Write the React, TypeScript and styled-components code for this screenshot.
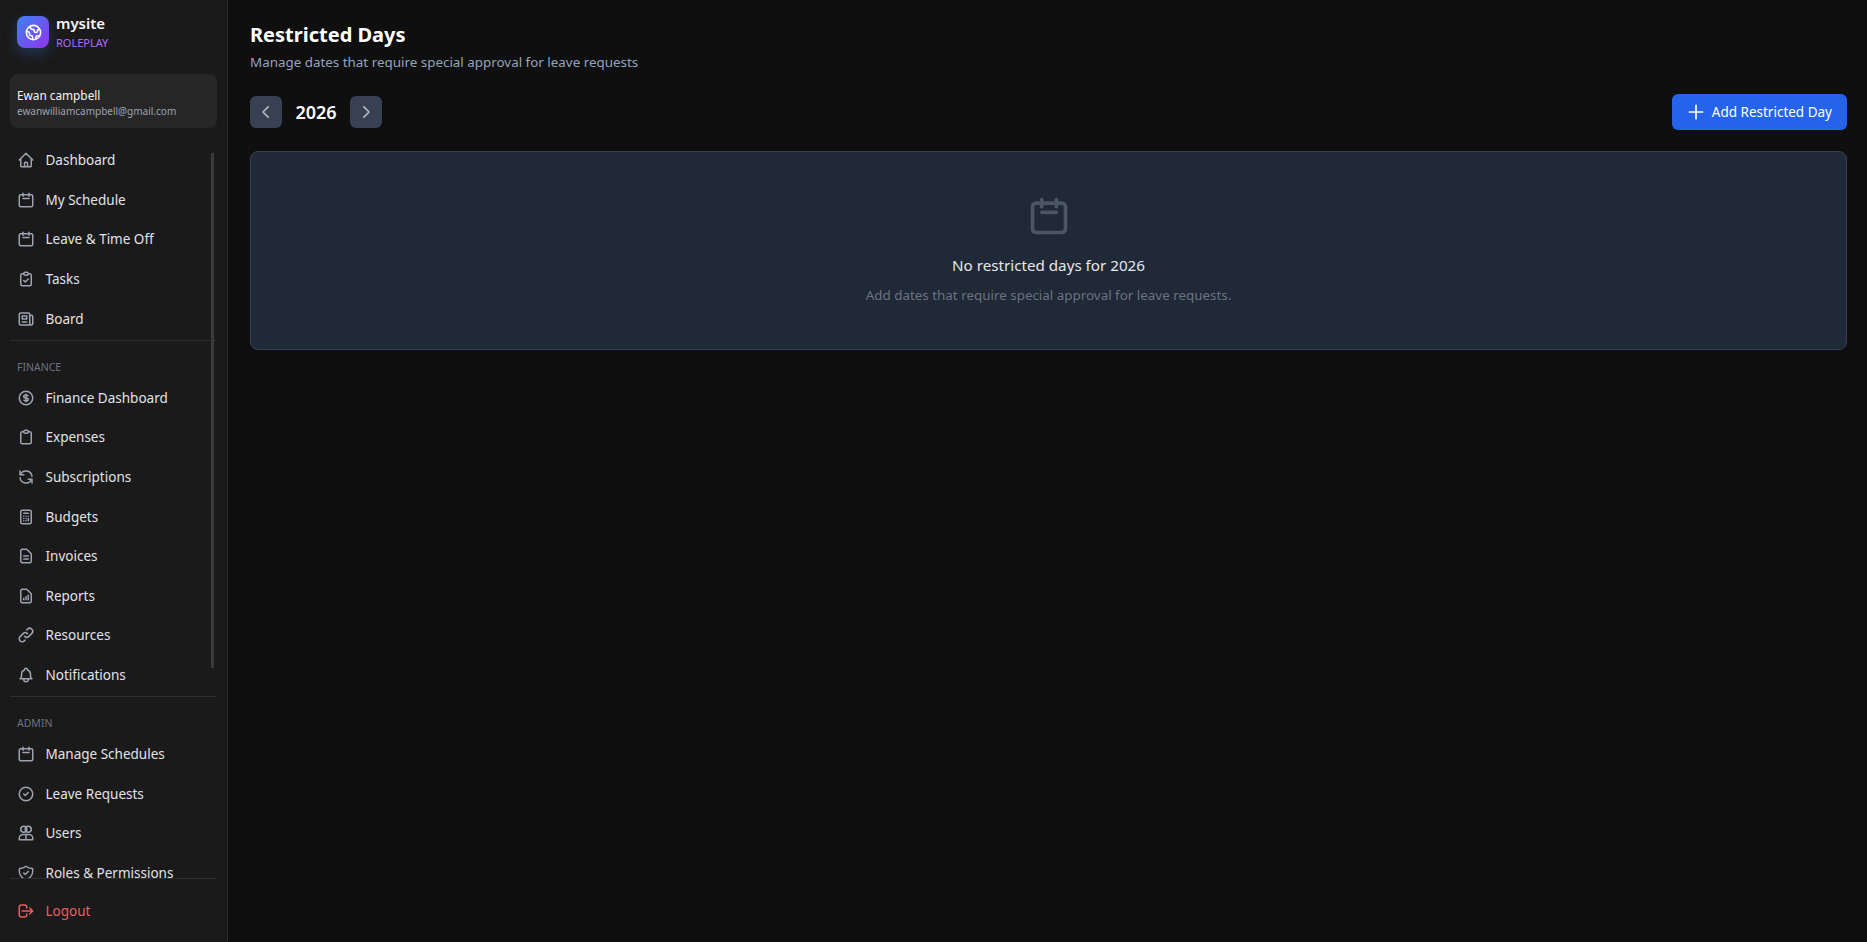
import React from "react";
import styled, { createGlobalStyle } from "styled-components";
import {
  HiOutlineHome,
  HiOutlineClipboardCheck,
  HiOutlineNewspaper,
  HiOutlineCurrencyDollar,
  HiOutlineClipboard,
  HiOutlineRefresh,
  HiOutlineCalculator,
  HiOutlineDocumentText,
  HiOutlineDocumentReport,
  HiOutlineLink,
  HiOutlineBell,
  HiOutlineCheckCircle,
  HiOutlineShieldCheck,
  HiOutlineLogout,
  HiOutlineChevronLeft,
  HiOutlineChevronRight,
  HiOutlinePlus,
  HiOutlineGlobe,
} from "react-icons/hi";

const GlobalStyle = createGlobalStyle`
  html, body {
    margin: 0;
    height: 100%;
    background: #0f0f0f;
    font-family: "Noto Sans", "Open Sans", sans-serif;
  }
  * { box-sizing: border-box; }
`;

const CalendarIcon = ({ size = 24 }: { size?: number }) => (
  <svg width={size} height={size} viewBox="0 0 24 24" fill="none" stroke="currentColor" strokeWidth="2" strokeLinecap="round" strokeLinejoin="round">
    <rect x="3" y="5" width="18" height="16" rx="2" />
    <path d="M8 3v4M16 3v4M8 10h8" />
  </svg>
);

const UsersIcon = () => (
  <svg width={24} height={24} viewBox="0 0 24 24" fill="none" stroke="currentColor" strokeWidth="2" strokeLinecap="round" strokeLinejoin="round">
    <ellipse cx="9" cy="7" rx="4" ry="4" />
    <ellipse cx="15" cy="7" rx="4" ry="4" />
    <path d="M3 21v-2a5 5 0 0 1 5-5h8a5 5 0 0 1 5 5v2z" />
    <path d="M12 14.500v6" />
  </svg>
);

const mainItems = [
  { label: "Dashboard", icon: <HiOutlineHome /> },
  { label: "My Schedule", icon: <CalendarIcon /> },
  { label: "Leave & Time Off", icon: <CalendarIcon /> },
  { label: "Tasks", icon: <HiOutlineClipboardCheck /> },
  { label: "Board", icon: <HiOutlineNewspaper /> },
];

const financeItems = [
  { label: "Finance Dashboard", icon: <HiOutlineCurrencyDollar /> },
  { label: "Expenses", icon: <HiOutlineClipboard /> },
  { label: "Subscriptions", icon: <HiOutlineRefresh /> },
  { label: "Budgets", icon: <HiOutlineCalculator /> },
  { label: "Invoices", icon: <HiOutlineDocumentText /> },
  { label: "Reports", icon: <HiOutlineDocumentReport /> },
  { label: "Resources", icon: <HiOutlineLink /> },
  { label: "Notifications", icon: <HiOutlineBell /> },
];

const adminItems = [
  { label: "Manage Schedules", icon: <CalendarIcon /> },
  { label: "Leave Requests", icon: <HiOutlineCheckCircle /> },
  { label: "Users", icon: <UsersIcon /> },
  { label: "Roles & Permissions", icon: <HiOutlineShieldCheck /> },
];

const App = () => {
  return (
    <Shell>
      <GlobalStyle />
      <Sidebar>
        <Brand>
          <LogoBox>
            <HiOutlineGlobe />
          </LogoBox>
          <BrandText>
            <BrandName>mysite</BrandName>
            <BrandTag>ROLEPLAY</BrandTag>
          </BrandText>
        </Brand>
        <ProfileCard>
          <ProfileName>Ewan campbell</ProfileName>
          <ProfileEmail>ewanwilliamcampbell@gmail.com</ProfileEmail>
        </ProfileCard>
        <NavScroll>
          <NavGroup>
            {mainItems.map((item) => (
              <NavRow key={item.label}>
                <NavIcon>{item.icon}</NavIcon>
                {item.label}
              </NavRow>
            ))}
          </NavGroup>
          <Divider />
          <SectionLabel>FINANCE</SectionLabel>
          <NavGroup>
            {financeItems.map((item) => (
              <NavRow key={item.label}>
                <NavIcon>{item.icon}</NavIcon>
                {item.label}
              </NavRow>
            ))}
          </NavGroup>
          <Divider />
          <SectionLabel>ADMIN</SectionLabel>
          <NavGroup>
            {adminItems.map((item) => (
              <NavRow key={item.label}>
                <NavIcon>{item.icon}</NavIcon>
                {item.label}
              </NavRow>
            ))}
          </NavGroup>
          <ScrollThumb />
        </NavScroll>
        <SidebarFooter>
          <LogoutRow>
            <NavIcon>
              <HiOutlineLogout />
            </NavIcon>
            Logout
          </LogoutRow>
        </SidebarFooter>
      </Sidebar>
      <Main>
        <Title>Restricted Days</Title>
        <Subtitle>Manage dates that require special approval for leave requests</Subtitle>
        <Toolbar>
          <YearNav>
            <YearButton>
              <HiOutlineChevronLeft />
            </YearButton>
            <YearLabel>2026</YearLabel>
            <YearButton>
              <HiOutlineChevronRight />
            </YearButton>
          </YearNav>
          <AddButton>
            <HiOutlinePlus />
            Add Restricted Day
          </AddButton>
        </Toolbar>
        <EmptyCard>
          <EmptyIcon>
            <CalendarIcon size={44} />
          </EmptyIcon>
          <EmptyTitle>No restricted days for 2026</EmptyTitle>
          <EmptyText>Add dates that require special approval for leave requests.</EmptyText>
        </EmptyCard>
      </Main>
    </Shell>
  );
};

const Shell = styled.div`
  display: flex;
  height: 942px;
  overflow: hidden;
  background: #0f0f0f;
`;

const Sidebar = styled.aside`
  width: 228px;
  flex-shrink: 0;
  height: 100%;
  display: flex;
  flex-direction: column;
  background: #1a1a1a;
  border-right: 1px solid #2a2a2a;
`;

const Brand = styled.div`
  display: flex;
  align-items: flex-start;
  gap: 7px;
  padding: 14px 17px 0;
  height: 74px;
`;

const LogoBox = styled.div`
  width: 32px;
  height: 32px;
  margin-top: 2px;
  border-radius: 8px;
  display: flex;
  align-items: center;
  justify-content: center;
  color: #fff;
  background: linear-gradient(135deg, #3b82f6, #9333ea);
  box-shadow: 0 6px 14px rgba(59, 130, 246, 0.25);
  svg {
    width: 19px;
    height: 19px;
  }
`;

const BrandText = styled.div`
  display: flex;
  flex-direction: column;
`;

const BrandName = styled.div`
  font-size: 15px;
  font-weight: 600;
  line-height: 18px;
  color: #f3f4f6;
`;

const BrandTag = styled.div`
  font-size: 11px;
  line-height: 16px;
  margin-top: 3px;
  color: #b06ef8;
`;

const ProfileCard = styled.div`
  margin: 0 10px;
  width: 207px;
  height: 54px;
  padding: 13px 7px 0;
  border-radius: 8px;
  background: #262626;
`;

const ProfileName = styled.div`
  font-size: 11.800px;
  line-height: 17px;
  color: #f3f4f6;
`;

const ProfileEmail = styled.div`
  font-size: 10px;
  line-height: 14px;
  color: #9ca3af;
`;

const NavScroll = styled.nav`
  position: relative;
  flex: 1;
  min-height: 0;
  overflow: hidden;
  margin-top: 12.500px;
  padding: 0 10px;
`;

const ScrollThumb = styled.div`
  position: absolute;
  top: 12px;
  right: 13px;
  width: 3px;
  height: 515px;
  background: #3a3a3a;
`;

const NavGroup = styled.div`
  display: flex;
  flex-direction: column;
`;

const NavRow = styled.div`
  display: flex;
  align-items: center;
  gap: 11px;
  height: 39.600px;
  padding-left: 6.500px;
  font-size: 13.500px;
  color: #e0e3e7;
  white-space: nowrap;
`;

const LogoutRow = styled(NavRow)`
  color: #e85d5d;
  margin-top: -1px;
`;

const NavIcon = styled.span`
  width: 18px;
  height: 18px;
  flex-shrink: 0;
  display: inline-flex;
  color: #9ca3af;
  svg {
    width: 18px;
    height: 18px;
  }
  ${LogoutRow} & {
    color: #e85d5d;
  }
`;

const Divider = styled.div`
  height: 1px;
  margin-top: 1.500px;
  background: #2e2e2e;
`;

const SectionLabel = styled.div`
  font-size: 10.500px;
  line-height: 14px;
  color: #6b7280;
  padding: 19px 7px 4px;
`;

const SidebarFooter = styled.div`
  flex-shrink: 0;
  height: 64px;
  margin: 0 10px;
  padding-top: 13px;
  border-top: 1px solid #2e2e2e;
`;

const Main = styled.main`
  flex: 1;
  min-width: 0;
  padding: 20px 20px 0 22px;
`;

const Title = styled.h1`
  margin: 0;
  font-size: 20px;
  font-weight: 700;
  line-height: 30px;
  color: #fff;
`;

const Subtitle = styled.p`
  margin: 2px 0 0;
  font-size: 13.400px;
  line-height: 20px;
  color: #94a3b8;
`;

const Toolbar = styled.div`
  display: flex;
  align-items: center;
  justify-content: space-between;
  margin-top: 22px;
`;

const YearNav = styled.div`
  display: flex;
  align-items: center;
`;

const YearButton = styled.button`
  width: 32px;
  height: 32px;
  padding: 0;
  border: 0;
  border-radius: 6px;
  background: #374151;
  color: #c0c5ce;
  display: flex;
  align-items: center;
  justify-content: center;
  svg {
    width: 18px;
    height: 18px;
  }
`;

const YearLabel = styled.span`
  width: 68px;
  text-align: center;
  font-size: 18px;
  font-weight: 600;
  color: #fff;
`;

const AddButton = styled.button`
  display: flex;
  align-items: center;
  gap: 6px;
  height: 36px;
  padding: 0 15px 0 14px;
  border: 0;
  border-radius: 6px;
  background: #2563eb;
  color: #fff;
  font-family: inherit;
  font-size: 13.500px;
  font-weight: 400;
  svg {
    width: 20px;
    height: 20px;
  }
`;

const EmptyCard = styled.section`
  margin-top: 21px;
  height: 199px;
  border: 1px solid #374151;
  border-radius: 8px;
  background: #1f2937;
  display: flex;
  flex-direction: column;
  align-items: center;
  padding-top: 42px;
`;

const EmptyIcon = styled.div`
  height: 44px;
  color: #4b5563;
`;

const EmptyTitle = styled.div`
  margin-top: 16px;
  font-size: 15.200px;
  line-height: 22px;
  color: #e5e7eb;
`;

const EmptyText = styled.div`
  margin-top: 9px;
  font-size: 13.400px;
  line-height: 20px;
  color: #6b7280;
`;

export default App;
